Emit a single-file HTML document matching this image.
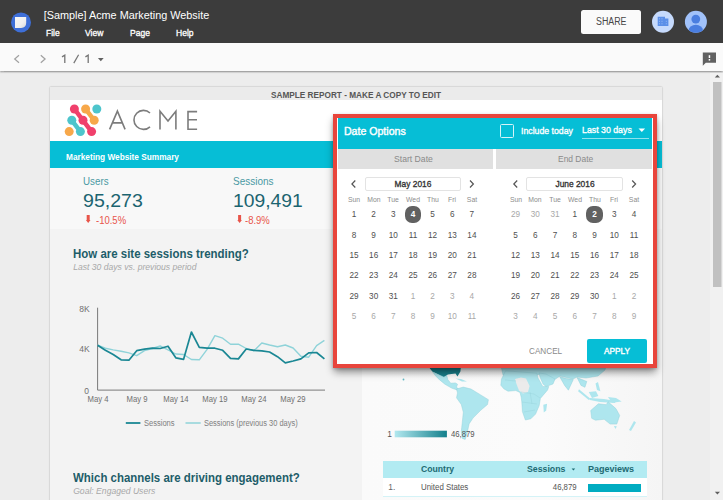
<!DOCTYPE html>
<html><head><meta charset="utf-8"><style>
*{margin:0;padding:0;box-sizing:border-box}
html,body{width:723px;height:500px;overflow:hidden;background:#ededed;font-family:"Liberation Sans",sans-serif}
.t{position:absolute;white-space:nowrap;line-height:1}
.b{position:absolute}
svg{position:absolute;overflow:visible}
</style></head><body>
<div class="b" style="left:0;top:0;width:723px;height:43px;background:#3c3c3c"></div>
<svg style="left:0;top:0" width="60" height="43">
  <circle cx="21" cy="22.4" r="10" fill="#3e6fd8"/>
  <defs><linearGradient id="dg" x1="0" y1="0" x2="1" y2="1"><stop offset="0" stop-color="#f7f7f7"/><stop offset="0.6" stop-color="#f0f0f0"/><stop offset="1" stop-color="#d8d8d8"/></linearGradient></defs>
  <path d="M15 17H26.2V22.8Q26.2 27.9 21.2 27.9H15Z" fill="url(#dg)"/>
</svg>
<div class="t" style="left:43.70px;top:10.00px;font-size:10.85px;color:#ffffff;font-weight:normal;font-style:normal;">[Sample] Acme Marketing Website</div>
<div class="t" style="left:45.50px;top:28.00px;font-size:9.8px;color:#ffffff;font-weight:normal;font-style:normal;transform:scaleX(0.87);transform-origin:0 0;-webkit-text-stroke:0.35px #ffffff;">File</div>
<div class="t" style="left:85.30px;top:28.00px;font-size:9.8px;color:#ffffff;font-weight:normal;font-style:normal;transform:scaleX(0.87);transform-origin:0 0;-webkit-text-stroke:0.35px #ffffff;">View</div>
<div class="t" style="left:130.40px;top:28.00px;font-size:9.8px;color:#ffffff;font-weight:normal;font-style:normal;transform:scaleX(0.87);transform-origin:0 0;-webkit-text-stroke:0.35px #ffffff;">Page</div>
<div class="t" style="left:176.40px;top:28.00px;font-size:9.8px;color:#ffffff;font-weight:normal;font-style:normal;transform:scaleX(0.87);transform-origin:0 0;-webkit-text-stroke:0.35px #ffffff;">Help</div>
<div class="b" style="left:581.4px;top:9.5px;width:60px;height:24.3px;background:#fafafa;border-radius:2.5px"></div>
<div class="t" style="left:596.00px;top:17.00px;font-size:10px;color:#474747;font-weight:normal;font-style:normal;transform:scaleX(0.885);transform-origin:0 0;">SHARE</div>
<svg style="left:640px;top:0" width="83" height="43">
  <circle cx="23" cy="21.8" r="11" fill="#c6dafc"/>
  <path d="M17.7 16.8h7.3v1.8h3.4v7.5h-10.7z" fill="#5b8fe8"/>
  <g fill="#c6dafc" opacity=".55"><rect x="19" y="18.3" width="1" height="1"/><rect x="21.5" y="18.3" width="1" height="1"/><rect x="19" y="20.8" width="1" height="1"/><rect x="21.5" y="20.8" width="1" height="1"/><rect x="19" y="23.3" width="1" height="1"/><rect x="21.5" y="23.3" width="1" height="1"/><rect x="25.8" y="20.8" width="1" height="1"/><rect x="25.8" y="23.3" width="1" height="1"/></g>
  <clipPath id="cc"><circle cx="55.9" cy="21.8" r="11"/></clipPath>
  <circle cx="55.9" cy="21.8" r="11" fill="#a1c2fa"/>
  <g clip-path="url(#cc)" fill="#4a7ee0"><circle cx="55.8" cy="19.1" r="4.4"/><ellipse cx="55.8" cy="30.5" rx="7.2" ry="5.8"/></g>
</svg>
<div class="b" style="left:0;top:43px;width:723px;height:28px;background:#fafafa;box-shadow:0 1.5px 1.5px rgba(0,0,0,.3)"></div>
<svg style="left:0;top:43px" width="723" height="28">
  <path d="M19 12.3l-4.3 3.7 4.3 3.7" stroke="#a0a0a0" stroke-width="1.2" fill="none"/>
  <path d="M40.8 12.3l4.3 3.7-4.3 3.7" stroke="#a0a0a0" stroke-width="1.2" fill="none"/>
  <path d="M97.9 15h5.8l-2.9 3.2z" fill="#616161"/>
  <path d="M702.8 9.5h13.2v10.3h-10.2l-3 3z" fill="#616161"/>
  <rect x="708.7" y="12.2" width="1.5" height="2.8" fill="#fff"/>
  <rect x="708.7" y="16" width="1.5" height="1.6" fill="#fff"/>
</svg>
<svg style="left:0;top:0" width="1" height="1"><path d="M62 56.9l2.8-1.7V63" stroke="#757575" stroke-width="1.3" fill="none"/><path d="M85.4 56.9l2.8-1.7V63" stroke="#757575" stroke-width="1.3" fill="none"/><path d="M73.8 63.1L78.6 54.7" stroke="#757575" stroke-width="1.2" fill="none"/></svg>
<div class="b" style="left:710px;top:73px;width:13px;height:427px;background:#f1f1f1"></div>
<svg style="left:705px;top:72px" width="18" height="428">
  <path d="M12.4 2.8l2.6 2.8h-5.2z" fill="#606060"/>
  <rect x="8" y="10" width="8.5" height="205" fill="#c1c1c1"/>
  <path d="M12.4 422.6l2.6-2.8h-5.2z" fill="#606060"/>
</svg>
<div class="b" style="left:50px;top:87px;width:612px;height:420px;background:#f3f3f3;box-shadow:0 0 1.5px rgba(0,0,0,.32)"></div>
<div class="b" style="left:50px;top:87px;width:612px;height:13px;background:#ebebeb"></div>
<div class="t" style="left:270.50px;top:91.00px;font-size:8.5px;color:#565656;font-weight:bold;font-style:normal;transform:scaleX(0.968);transform-origin:0 0;">SAMPLE REPORT - MAKE A COPY TO EDIT</div>
<div class="b" style="left:50px;top:100px;width:612px;height:41px;background:#ffffff"></div>
<div class="b" style="left:50px;top:141px;width:612px;height:27px;background:#06bed6"></div>
<div class="t" style="left:66.40px;top:153.00px;font-size:9.3px;color:#ffffff;font-weight:bold;font-style:normal;transform:scaleX(0.89);transform-origin:0 0;">Marketing Website Summary</div>
<div class="b" style="left:50px;top:168px;width:612px;height:61px;background:#f8f8f8"></div>
<div class="b" style="left:362px;top:229px;width:300px;height:280px;background:linear-gradient(90deg,#fafafa,#fbfbfb 60%,#f5f5f5)"></div>
<svg style="left:0;top:0" width="723" height="500"><line x1="74.4" y1="109.0" x2="83.0" y2="120.3" stroke="#f0406c" stroke-width="4.5" stroke-linecap="round"/><line x1="83.0" y1="120.3" x2="91.6" y2="131.6" stroke="#f0406c" stroke-width="4.5" stroke-linecap="round"/><line x1="85.6" y1="109.0" x2="94.2" y2="120.3" stroke="#f7a84a" stroke-width="4.5" stroke-linecap="round"/><line x1="71.8" y1="120.3" x2="80.4" y2="131.6" stroke="#4dc5cc" stroke-width="4.5" stroke-linecap="round"/><circle cx="74.4" cy="109.0" r="4.5" fill="#f0406c"/><circle cx="85.6" cy="109.0" r="4.5" fill="#f7a84a"/><circle cx="96.8" cy="109.0" r="4.5" fill="#4dc5cc"/><circle cx="71.8" cy="120.3" r="4.5" fill="#4dc5cc"/><circle cx="83.0" cy="120.3" r="4.5" fill="#f0406c"/><circle cx="94.2" cy="120.3" r="4.5" fill="#f7a84a"/><circle cx="69.2" cy="131.6" r="4.5" fill="#f7a84a"/><circle cx="80.4" cy="131.6" r="4.5" fill="#4dc5cc"/><circle cx="91.6" cy="131.6" r="4.5" fill="#f0406c"/><path d="M109.6 129.4L117.4 111.1L125.1 129.4M112.4 122.9H122.3" stroke="#7c7c7c" stroke-width="1.6" fill="none"/><path d="M150.0 113.0A9.5 9.5 0 1 0 150.0 126.8" stroke="#7c7c7c" stroke-width="1.6" fill="none"/><path d="M160 129.6V111.2L168 121L175.9 111.2V129.6" stroke="#7c7c7c" stroke-width="1.6" fill="none" stroke-linejoin="miter"/><path d="M197.1 111.6H188V129.2H197.1M188 119.7H197" stroke="#7c7c7c" stroke-width="1.6" fill="none"/></svg>
<div class="t" style="left:83.40px;top:177.00px;font-size:10.2px;color:#4a99a3;font-weight:normal;font-style:normal;transform:scaleX(0.96);transform-origin:0 0;">Users</div>
<div class="t" style="left:83.00px;top:191.00px;font-size:19px;color:#1b6470;font-weight:normal;font-style:normal;transform:scaleX(1.03);transform-origin:0 0;">95,273</div>
<div class="t" style="left:233.00px;top:177.00px;font-size:10.2px;color:#4a99a3;font-weight:normal;font-style:normal;transform:scaleX(0.98);transform-origin:0 0;">Sessions</div>
<div class="t" style="left:233.40px;top:191.00px;font-size:19px;color:#1b6470;font-weight:normal;font-style:normal;transform:scaleX(1.015);transform-origin:0 0;">109,491</div>
<div class="t" style="left:96.20px;top:216.00px;font-size:10px;color:#e8554a;font-weight:normal;font-style:normal;transform:scaleX(0.95);transform-origin:0 0;">-10.5%</div>
<div class="t" style="left:245.40px;top:216.00px;font-size:10px;color:#e8554a;font-weight:normal;font-style:normal;transform:scaleX(0.95);transform-origin:0 0;">-8.9%</div>
<svg style="left:0;top:0" width="1" height="1"><path d="M86.7 215h3v5h0.8l-2.3 3.1-2.3-3.1h0.8z" fill="#e8554a"/></svg>
<svg style="left:0;top:0" width="1" height="1"><path d="M238.1 215h3v5h0.8l-2.3 3.1-2.3-3.1h0.8z" fill="#e8554a"/></svg>
<div class="t" style="left:72.80px;top:248.00px;font-size:12.4px;color:#1d5d69;font-weight:bold;font-style:normal;transform:scaleX(0.925);transform-origin:0 0;">How are site sessions trending?</div>
<div class="t" style="left:73.20px;top:263.00px;font-size:8.6px;color:#a8a8a8;font-weight:normal;font-style:italic;">Last 30 days vs. previous period</div>
<svg style="left:0;top:0" width="723" height="500"><path d="M97.6 307.7V390.1H325" stroke="#7a7a7a" stroke-width="1" fill="none"/><polyline points="97.6,345.2 105.4,348.2 113.2,349.9 121.1,351.2 128.9,352.9 136.7,355.7 144.5,350.7 152.3,348.5 160.2,346.0 168.0,349.9 175.8,354.0 183.6,354.5 191.4,359.5 199.3,359.8 207.1,349.4 214.9,335.6 222.7,338.2 230.5,344.2 238.4,344.2 246.2,348.5 254.0,350.8 261.8,343.0 269.6,345.0 277.5,346.8 285.3,345.0 293.1,348.0 300.9,356.3 308.7,357.2 316.6,345.6 324.4,340.4" stroke="#8fd3d9" stroke-width="1.4" fill="none" stroke-linejoin="round"/><polyline points="97.6,345.2 105.4,350.2 113.2,354.5 121.1,359.8 128.9,360.2 136.7,350.7 144.5,349.2 152.3,348.2 160.2,348.5 168.0,346.2 175.8,357.8 183.6,359.3 191.4,332.0 199.3,347.4 207.1,348.2 214.9,348.2 222.7,350.3 230.5,358.4 238.4,358.9 246.2,349.0 254.0,350.3 261.8,350.8 269.6,352.0 277.5,356.7 285.3,362.9 293.1,361.0 300.9,358.9 308.7,352.8 316.6,352.5 324.4,358.9" stroke="#1a8794" stroke-width="1.7" fill="none" stroke-linejoin="round"/><line x1="125.8" y1="423" x2="140.4" y2="423" stroke="#1a8794" stroke-width="1.8"/><line x1="185.5" y1="423" x2="200.7" y2="423" stroke="#8fd3d9" stroke-width="1.5"/></svg>
<div class="t" style="right:633.40px;top:305.00px;font-size:8.5px;color:#707070;font-weight:normal;font-style:normal;">8K</div>
<div class="t" style="right:633.40px;top:345.00px;font-size:8.5px;color:#707070;font-weight:normal;font-style:normal;">4K</div>
<div class="t" style="right:634.10px;top:387.00px;font-size:8.5px;color:#707070;font-weight:normal;font-style:normal;">0</div>
<div class="t" style="left:97.60px;top:395.00px;font-size:8.4px;color:#707070;font-weight:normal;font-style:normal;transform:translateX(-50%) scaleX(0.92);transform-origin:50% 0;">May 4</div>
<div class="t" style="left:136.70px;top:395.00px;font-size:8.4px;color:#707070;font-weight:normal;font-style:normal;transform:translateX(-50%) scaleX(0.92);transform-origin:50% 0;">May 9</div>
<div class="t" style="left:175.80px;top:395.00px;font-size:8.4px;color:#707070;font-weight:normal;font-style:normal;transform:translateX(-50%) scaleX(0.92);transform-origin:50% 0;">May 14</div>
<div class="t" style="left:214.90px;top:395.00px;font-size:8.4px;color:#707070;font-weight:normal;font-style:normal;transform:translateX(-50%) scaleX(0.92);transform-origin:50% 0;">May 19</div>
<div class="t" style="left:254.00px;top:395.00px;font-size:8.4px;color:#707070;font-weight:normal;font-style:normal;transform:translateX(-50%) scaleX(0.92);transform-origin:50% 0;">May 24</div>
<div class="t" style="left:293.10px;top:395.00px;font-size:8.4px;color:#707070;font-weight:normal;font-style:normal;transform:translateX(-50%) scaleX(0.92);transform-origin:50% 0;">May 29</div>
<div class="t" style="left:143.70px;top:419.00px;font-size:8.4px;color:#808080;font-weight:normal;font-style:normal;transform:scaleX(0.9);transform-origin:0 0;">Sessions</div>
<div class="t" style="left:203.50px;top:419.00px;font-size:8.4px;color:#808080;font-weight:normal;font-style:normal;transform:scaleX(0.89);transform-origin:0 0;">Sessions (previous 30 days)</div>
<div class="t" style="left:72.80px;top:472.00px;font-size:12.4px;color:#1d5d69;font-weight:bold;font-style:normal;transform:scaleX(0.925);transform-origin:0 0;">Which channels are driving engagement?</div>
<div class="t" style="left:73.20px;top:487.00px;font-size:8.6px;color:#a8a8a8;font-weight:normal;font-style:italic;">Goal: Engaged Users</div>
<svg style="left:0;top:0" width="723" height="500"><defs><linearGradient id="lg" x1="0" x2="1"><stop offset="0" stop-color="#b2e8ef"/><stop offset="1" stop-color="#13808c"/></linearGradient></defs><rect x="394.7" y="430.7" width="52.2" height="6.6" fill="url(#lg)"/><path d="M428.0 366.0L461.0 366.0L460.4 371.6L457.5 376.5L455.5 373.6L447.8 374.5L443.9 377.4L438.1 374.5L432.3 371.6Z" fill="#17808c"/><path d="M432.7 372.0L443.9 377.0L446.8 375.5L447.8 379.4L450.7 383.2L455.5 382.9L457.5 384.2L456.5 387.1L458.4 389.0L457.1 390.0L451.6 388.1L444.9 384.2L439.1 379.4L435.2 375.5Z" fill="#aee6ee" stroke="#90d0da" stroke-width=".45" stroke-linejoin="round"/><path d="M455.5 378.6L461.0 379.0L467.0 381.5L462.0 381.5Z" fill="#aee6ee"/><path d="M456.5 389.0L463.3 387.1L471.0 389.0L480.7 394.9L488.4 399.7L487.5 404.5L480.7 410.3L473.0 418.1L469.1 423.9L467.1 433.6L465.2 439.4L462.3 438.4L461.3 431.6L462.3 422.0L463.3 412.3L461.3 404.5L456.5 397.8L457.5 392.9Z" fill="#aee6ee" stroke="#90d0da" stroke-width=".45" stroke-linejoin="round"/><circle cx="403.5" cy="379.5" r=".9" fill="#5fb9c4"/><path d="M501.0 366.0L606.0 366.0L605.0 370.0L598.0 376.0L586.0 378.0L577.0 377.0L573.0 379.0L560.0 376.0L554.0 380.0L548.0 379.0L540.0 374.0L528.0 378.0L515.0 379.0L503.0 375.0Z" fill="#aee6ee" stroke="#90d0da" stroke-width=".45" stroke-linejoin="round"/><path d="M505.6 370.8L501.4 379.2L500.8 385.2L503.8 388.8L508.0 391.2L515.8 390.6L520.0 392.4L521.2 397.2L521.8 402.0L522.4 411.6L525.4 420.0L530.8 418.8L535.6 414.0L539.2 405.6L540.4 398.4L547.6 390.0L548.8 386.4L542.8 386.4L538.0 378.0L536.8 373.2Z" fill="#aee6ee" stroke="#90d0da" stroke-width=".45" stroke-linejoin="round"/><path d="M515.0 379.0L521.0 377.5L526.0 378.5L529.6 386.0L528.0 392.0L523.0 393.5L519.0 390.6L516.5 384.0Z" fill="#ebebeb"/><path d="M539.0 373.0L546.0 374.0L555.0 379.0L553.0 384.0L546.0 386.5L543.0 384.0L540.0 377.0Z" fill="#aee6ee" stroke="#90d0da" stroke-width=".45" stroke-linejoin="round"/><path d="M543.3 404.7L547.1 403.8L546.2 410.5L543.8 412.5Z" fill="#aee6ee"/><path d="M505 380L516 381M521 392L534 394L540 398M522 402L537 404M524 412L535 410M530 392L532 404" stroke="#96d2da" stroke-width=".4" fill="none"/><path d="M559.7 376.7L566.5 378.6L573.3 379.6L568.4 390.2L564.6 385.4Z" fill="#aee6ee" stroke="#90d0da" stroke-width=".45" stroke-linejoin="round"/><path d="M577.1 377.6L586.8 381.5L584.9 387.3L581.0 385.4Z" fill="#aee6ee" stroke="#90d0da" stroke-width=".45" stroke-linejoin="round"/><path d="M579.0 389.2L590.7 398.9L588.8 399.9L578.1 391.2Z" fill="#aee6ee"/><path d="M590.0 398.0L604.0 399.0L616.0 401.0L615.0 403.0L600.0 402.0L590.0 400.0Z" fill="#aee6ee"/><path d="M588.8 392.0L596.0 391.2L598.4 396.0L592.0 398.0Z" fill="#aee6ee"/><path d="M595.5 383.4L598.0 382.0L600.4 391.2L597.0 390.0Z" fill="#aee6ee"/><path d="M608.0 397.0L616.0 398.0L621.7 401.5L612.0 402.8Z" fill="#aee6ee"/><path d="M590.7 410.5L598.4 403.8L606.2 404.7L608.1 401.8L615.9 408.6L619.7 415.4L616.8 424.1L610.1 424.1L604.2 419.3L595.5 420.2L591.7 418.3Z" fill="#aee6ee" stroke="#90d0da" stroke-width=".45" stroke-linejoin="round"/><path d="M613.9 426.0L616.8 426.3L615.5 428.9Z" fill="#aee6ee"/><path d="M634.0 421.0L636.0 422.5L631.0 431.0L629.0 430.0Z" fill="#aee6ee"/></svg>
<div class="t" style="left:387.20px;top:430.00px;font-size:8.4px;color:#555555;font-weight:normal;font-style:normal;">1</div>
<div class="t" style="left:450.90px;top:430.00px;font-size:8.4px;color:#555555;font-weight:normal;font-style:normal;transform:scaleX(0.92);transform-origin:0 0;">46,879</div>
<div class="b" style="left:382.8px;top:460.8px;width:264.2px;height:17px;background:#b2ebf2"></div>
<div class="b" style="left:382.8px;top:477.8px;width:264.2px;height:19.5px;background:#ffffff;border-bottom:1px solid #d4f3f7"></div>
<div class="t" style="left:421.30px;top:465.00px;font-size:9.3px;color:#1d6a72;font-weight:bold;font-style:normal;transform:scaleX(0.93);transform-origin:0 0;">Country</div>
<div class="t" style="left:527.00px;top:465.00px;font-size:9.3px;color:#1d6a72;font-weight:bold;font-style:normal;transform:scaleX(0.94);transform-origin:0 0;">Sessions</div>
<svg style="left:0;top:0" width="1" height="1"><path d="M571.6 468.6h3.6l-1.8 2z" fill="#1d6a72"/></svg>
<div class="t" style="left:588.40px;top:465.00px;font-size:9.3px;color:#1d6a72;font-weight:bold;font-style:normal;transform:scaleX(0.97);transform-origin:0 0;">Pageviews</div>
<div class="t" style="left:388.30px;top:483.00px;font-size:8.4px;color:#666666;font-weight:normal;font-style:normal;">1.</div>
<div class="t" style="left:421.30px;top:483.00px;font-size:8.4px;color:#555555;font-weight:normal;font-style:normal;transform:scaleX(0.94);transform-origin:0 0;">United States</div>
<div class="t" style="right:146.00px;top:483.00px;font-size:8.4px;color:#555555;font-weight:normal;font-style:normal;transform:scaleX(0.93);transform-origin:100% 0;">46,879</div>
<div class="b" style="left:588.2px;top:484px;width:52.4px;height:7.9px;background:#00acc1"></div>
<div class="b" style="left:333.2px;top:113.5px;width:323.59999999999997px;height:254.5px;background:#fff;border:4.4px solid #e8453c;box-shadow:0 1px 3px rgba(0,0,0,.18),0 5px 8px -1px rgba(0,0,0,.45)"></div>
<div class="b" style="left:337.59999999999997px;top:117.9px;width:314.8px;height:30.900000000000006px;background:#06bed6"></div>
<div class="t" style="left:343.90px;top:126.00px;font-size:10.6px;color:#ffffff;font-weight:normal;font-style:normal;-webkit-text-stroke:0.4px #ffffff;">Date Options</div>
<div class="b" style="left:500.3px;top:124.4px;width:13.5px;height:13.2px;border:1.4px solid #d6f4f8;border-radius:1.5px"></div>
<div class="t" style="left:521.00px;top:126.00px;font-size:9.6px;color:#ffffff;font-weight:normal;font-style:normal;transform:scaleX(0.91);transform-origin:0 0;-webkit-text-stroke:0.35px #ffffff;">Include today</div>
<div class="t" style="left:581.70px;top:125.00px;font-size:9.6px;color:#ffffff;font-weight:normal;font-style:normal;transform:scaleX(0.915);transform-origin:0 0;-webkit-text-stroke:0.35px #ffffff;">Last 30 days</div>
<div class="b" style="left:581.7px;top:138.2px;width:67.7px;height:1px;background:rgba(255,255,255,.55)"></div>
<svg style="left:0;top:0" width="1" height="1"><path d="M638.5 128.4h6.6l-3.3 3.6z" fill="#ffffff"/></svg>
<div class="b" style="left:337.59999999999997px;top:148.8px;width:155.90000000000003px;height:20.7px;background:#e0e0e0"></div>
<div class="b" style="left:495.5px;top:148.8px;width:156.89999999999998px;height:20.7px;background:#e0e0e0"></div>
<div class="t" style="left:393.50px;top:154.00px;font-size:9.4px;color:#8a8a8a;font-weight:normal;font-style:normal;transform:scaleX(0.92);transform-origin:0 0;">Start Date</div>
<div class="t" style="left:557.60px;top:154.00px;font-size:9.4px;color:#8a8a8a;font-weight:normal;font-style:normal;transform:scaleX(0.9);transform-origin:0 0;">End Date</div>
<div class="b" style="left:364.6px;top:177px;width:96.59999999999997px;height:14.2px;border:1px solid #e3e3e3;border-radius:2px;background:#fff"></div>
<div class="t" style="left:412.90px;top:180.00px;font-size:9.3px;color:#333333;font-weight:normal;font-style:normal;transform:translateX(-50%) scaleX(0.9);transform-origin:50% 0;-webkit-text-stroke:0.35px #333333;">May 2016</div>
<svg style="left:0;top:0" width="1" height="1"><path d="M355.3 180.5l-3.4 3.5 3.4 3.5" stroke="#555" stroke-width="1.2" fill="none"/><path d="M470.0 180.5l3.4 3.5-3.4 3.5" stroke="#555" stroke-width="1.2" fill="none"/></svg>
<div class="t" style="left:354.00px;top:196.00px;font-size:7.2px;color:#8c8c8c;font-weight:normal;font-style:normal;transform:translateX(-50%) scaleX(0.95);transform-origin:50% 0;">Sun</div>
<div class="t" style="left:373.65px;top:196.00px;font-size:7.2px;color:#8c8c8c;font-weight:normal;font-style:normal;transform:translateX(-50%) scaleX(0.95);transform-origin:50% 0;">Mon</div>
<div class="t" style="left:393.30px;top:196.00px;font-size:7.2px;color:#8c8c8c;font-weight:normal;font-style:normal;transform:translateX(-50%) scaleX(0.95);transform-origin:50% 0;">Tue</div>
<div class="t" style="left:412.95px;top:196.00px;font-size:7.2px;color:#8c8c8c;font-weight:normal;font-style:normal;transform:translateX(-50%) scaleX(0.95);transform-origin:50% 0;">Wed</div>
<div class="t" style="left:432.60px;top:196.00px;font-size:7.2px;color:#8c8c8c;font-weight:normal;font-style:normal;transform:translateX(-50%) scaleX(0.95);transform-origin:50% 0;">Thu</div>
<div class="t" style="left:452.25px;top:196.00px;font-size:7.2px;color:#8c8c8c;font-weight:normal;font-style:normal;transform:translateX(-50%) scaleX(0.95);transform-origin:50% 0;">Fri</div>
<div class="t" style="left:471.90px;top:196.00px;font-size:7.2px;color:#8c8c8c;font-weight:normal;font-style:normal;transform:translateX(-50%) scaleX(0.95);transform-origin:50% 0;">Sat</div>
<div class="t" style="left:354.00px;top:211.00px;font-size:8.2px;color:#4f4f4f;font-weight:normal;font-style:normal;transform:translateX(-50%) scaleX(1.0);transform-origin:50% 0;">1</div>
<div class="t" style="left:373.65px;top:211.00px;font-size:8.2px;color:#4f4f4f;font-weight:normal;font-style:normal;transform:translateX(-50%) scaleX(1.0);transform-origin:50% 0;">2</div>
<div class="t" style="left:393.30px;top:211.00px;font-size:8.2px;color:#4f4f4f;font-weight:normal;font-style:normal;transform:translateX(-50%) scaleX(1.0);transform-origin:50% 0;">3</div>
<div class="b" style="left:404.65px;top:206.10px;width:16.6px;height:16.6px;border-radius:7px;background:#616161"></div>
<div class="t" style="left:412.95px;top:211.00px;font-size:8.2px;color:#ffffff;font-weight:bold;font-style:normal;transform:translateX(-50%) scaleX(1.0);transform-origin:50% 0;">4</div>
<div class="t" style="left:432.60px;top:211.00px;font-size:8.2px;color:#4f4f4f;font-weight:normal;font-style:normal;transform:translateX(-50%) scaleX(1.0);transform-origin:50% 0;">5</div>
<div class="t" style="left:452.25px;top:211.00px;font-size:8.2px;color:#4f4f4f;font-weight:normal;font-style:normal;transform:translateX(-50%) scaleX(1.0);transform-origin:50% 0;">6</div>
<div class="t" style="left:471.90px;top:211.00px;font-size:8.2px;color:#4f4f4f;font-weight:normal;font-style:normal;transform:translateX(-50%) scaleX(1.0);transform-origin:50% 0;">7</div>
<div class="t" style="left:354.00px;top:232.00px;font-size:8.2px;color:#4f4f4f;font-weight:normal;font-style:normal;transform:translateX(-50%) scaleX(1.0);transform-origin:50% 0;">8</div>
<div class="t" style="left:373.65px;top:232.00px;font-size:8.2px;color:#4f4f4f;font-weight:normal;font-style:normal;transform:translateX(-50%) scaleX(1.0);transform-origin:50% 0;">9</div>
<div class="t" style="left:393.30px;top:232.00px;font-size:8.2px;color:#4f4f4f;font-weight:normal;font-style:normal;transform:translateX(-50%) scaleX(1.0);transform-origin:50% 0;">10</div>
<div class="t" style="left:412.95px;top:232.00px;font-size:8.2px;color:#4f4f4f;font-weight:normal;font-style:normal;transform:translateX(-50%) scaleX(1.0);transform-origin:50% 0;">11</div>
<div class="t" style="left:432.60px;top:232.00px;font-size:8.2px;color:#4f4f4f;font-weight:normal;font-style:normal;transform:translateX(-50%) scaleX(1.0);transform-origin:50% 0;">12</div>
<div class="t" style="left:452.25px;top:232.00px;font-size:8.2px;color:#4f4f4f;font-weight:normal;font-style:normal;transform:translateX(-50%) scaleX(1.0);transform-origin:50% 0;">13</div>
<div class="t" style="left:471.90px;top:232.00px;font-size:8.2px;color:#4f4f4f;font-weight:normal;font-style:normal;transform:translateX(-50%) scaleX(1.0);transform-origin:50% 0;">14</div>
<div class="t" style="left:354.00px;top:252.00px;font-size:8.2px;color:#4f4f4f;font-weight:normal;font-style:normal;transform:translateX(-50%) scaleX(1.0);transform-origin:50% 0;">15</div>
<div class="t" style="left:373.65px;top:252.00px;font-size:8.2px;color:#4f4f4f;font-weight:normal;font-style:normal;transform:translateX(-50%) scaleX(1.0);transform-origin:50% 0;">16</div>
<div class="t" style="left:393.30px;top:252.00px;font-size:8.2px;color:#4f4f4f;font-weight:normal;font-style:normal;transform:translateX(-50%) scaleX(1.0);transform-origin:50% 0;">17</div>
<div class="t" style="left:412.95px;top:252.00px;font-size:8.2px;color:#4f4f4f;font-weight:normal;font-style:normal;transform:translateX(-50%) scaleX(1.0);transform-origin:50% 0;">18</div>
<div class="t" style="left:432.60px;top:252.00px;font-size:8.2px;color:#4f4f4f;font-weight:normal;font-style:normal;transform:translateX(-50%) scaleX(1.0);transform-origin:50% 0;">19</div>
<div class="t" style="left:452.25px;top:252.00px;font-size:8.2px;color:#4f4f4f;font-weight:normal;font-style:normal;transform:translateX(-50%) scaleX(1.0);transform-origin:50% 0;">20</div>
<div class="t" style="left:471.90px;top:252.00px;font-size:8.2px;color:#4f4f4f;font-weight:normal;font-style:normal;transform:translateX(-50%) scaleX(1.0);transform-origin:50% 0;">21</div>
<div class="t" style="left:354.00px;top:272.00px;font-size:8.2px;color:#4f4f4f;font-weight:normal;font-style:normal;transform:translateX(-50%) scaleX(1.0);transform-origin:50% 0;">22</div>
<div class="t" style="left:373.65px;top:272.00px;font-size:8.2px;color:#4f4f4f;font-weight:normal;font-style:normal;transform:translateX(-50%) scaleX(1.0);transform-origin:50% 0;">23</div>
<div class="t" style="left:393.30px;top:272.00px;font-size:8.2px;color:#4f4f4f;font-weight:normal;font-style:normal;transform:translateX(-50%) scaleX(1.0);transform-origin:50% 0;">24</div>
<div class="t" style="left:412.95px;top:272.00px;font-size:8.2px;color:#4f4f4f;font-weight:normal;font-style:normal;transform:translateX(-50%) scaleX(1.0);transform-origin:50% 0;">25</div>
<div class="t" style="left:432.60px;top:272.00px;font-size:8.2px;color:#4f4f4f;font-weight:normal;font-style:normal;transform:translateX(-50%) scaleX(1.0);transform-origin:50% 0;">26</div>
<div class="t" style="left:452.25px;top:272.00px;font-size:8.2px;color:#4f4f4f;font-weight:normal;font-style:normal;transform:translateX(-50%) scaleX(1.0);transform-origin:50% 0;">27</div>
<div class="t" style="left:471.90px;top:272.00px;font-size:8.2px;color:#4f4f4f;font-weight:normal;font-style:normal;transform:translateX(-50%) scaleX(1.0);transform-origin:50% 0;">28</div>
<div class="t" style="left:354.00px;top:293.00px;font-size:8.2px;color:#4f4f4f;font-weight:normal;font-style:normal;transform:translateX(-50%) scaleX(1.0);transform-origin:50% 0;">29</div>
<div class="t" style="left:373.65px;top:293.00px;font-size:8.2px;color:#4f4f4f;font-weight:normal;font-style:normal;transform:translateX(-50%) scaleX(1.0);transform-origin:50% 0;">30</div>
<div class="t" style="left:393.30px;top:293.00px;font-size:8.2px;color:#4f4f4f;font-weight:normal;font-style:normal;transform:translateX(-50%) scaleX(1.0);transform-origin:50% 0;">31</div>
<div class="t" style="left:412.95px;top:293.00px;font-size:8.2px;color:#a8a8a8;font-weight:normal;font-style:normal;transform:translateX(-50%) scaleX(1.0);transform-origin:50% 0;">1</div>
<div class="t" style="left:432.60px;top:293.00px;font-size:8.2px;color:#a8a8a8;font-weight:normal;font-style:normal;transform:translateX(-50%) scaleX(1.0);transform-origin:50% 0;">2</div>
<div class="t" style="left:452.25px;top:293.00px;font-size:8.2px;color:#a8a8a8;font-weight:normal;font-style:normal;transform:translateX(-50%) scaleX(1.0);transform-origin:50% 0;">3</div>
<div class="t" style="left:471.90px;top:293.00px;font-size:8.2px;color:#a8a8a8;font-weight:normal;font-style:normal;transform:translateX(-50%) scaleX(1.0);transform-origin:50% 0;">4</div>
<div class="t" style="left:354.00px;top:313.00px;font-size:8.2px;color:#a8a8a8;font-weight:normal;font-style:normal;transform:translateX(-50%) scaleX(1.0);transform-origin:50% 0;">5</div>
<div class="t" style="left:373.65px;top:313.00px;font-size:8.2px;color:#a8a8a8;font-weight:normal;font-style:normal;transform:translateX(-50%) scaleX(1.0);transform-origin:50% 0;">6</div>
<div class="t" style="left:393.30px;top:313.00px;font-size:8.2px;color:#a8a8a8;font-weight:normal;font-style:normal;transform:translateX(-50%) scaleX(1.0);transform-origin:50% 0;">7</div>
<div class="t" style="left:412.95px;top:313.00px;font-size:8.2px;color:#a8a8a8;font-weight:normal;font-style:normal;transform:translateX(-50%) scaleX(1.0);transform-origin:50% 0;">8</div>
<div class="t" style="left:432.60px;top:313.00px;font-size:8.2px;color:#a8a8a8;font-weight:normal;font-style:normal;transform:translateX(-50%) scaleX(1.0);transform-origin:50% 0;">9</div>
<div class="t" style="left:452.25px;top:313.00px;font-size:8.2px;color:#a8a8a8;font-weight:normal;font-style:normal;transform:translateX(-50%) scaleX(1.0);transform-origin:50% 0;">10</div>
<div class="t" style="left:471.90px;top:313.00px;font-size:8.2px;color:#a8a8a8;font-weight:normal;font-style:normal;transform:translateX(-50%) scaleX(1.0);transform-origin:50% 0;">11</div>
<div class="b" style="left:526.4px;top:177px;width:97.10000000000002px;height:14.2px;border:1px solid #e3e3e3;border-radius:2px;background:#fff"></div>
<div class="t" style="left:574.95px;top:180.00px;font-size:9.3px;color:#333333;font-weight:normal;font-style:normal;transform:translateX(-50%) scaleX(0.9);transform-origin:50% 0;-webkit-text-stroke:0.35px #333333;">June 2016</div>
<svg style="left:0;top:0" width="1" height="1"><path d="M517.1999999999999 180.5l-3.4 3.5 3.4 3.5" stroke="#555" stroke-width="1.2" fill="none"/><path d="M632.2 180.5l3.4 3.5-3.4 3.5" stroke="#555" stroke-width="1.2" fill="none"/></svg>
<div class="t" style="left:515.60px;top:196.00px;font-size:7.2px;color:#8c8c8c;font-weight:normal;font-style:normal;transform:translateX(-50%) scaleX(0.95);transform-origin:50% 0;">Sun</div>
<div class="t" style="left:535.35px;top:196.00px;font-size:7.2px;color:#8c8c8c;font-weight:normal;font-style:normal;transform:translateX(-50%) scaleX(0.95);transform-origin:50% 0;">Mon</div>
<div class="t" style="left:555.10px;top:196.00px;font-size:7.2px;color:#8c8c8c;font-weight:normal;font-style:normal;transform:translateX(-50%) scaleX(0.95);transform-origin:50% 0;">Tue</div>
<div class="t" style="left:574.85px;top:196.00px;font-size:7.2px;color:#8c8c8c;font-weight:normal;font-style:normal;transform:translateX(-50%) scaleX(0.95);transform-origin:50% 0;">Wed</div>
<div class="t" style="left:594.60px;top:196.00px;font-size:7.2px;color:#8c8c8c;font-weight:normal;font-style:normal;transform:translateX(-50%) scaleX(0.95);transform-origin:50% 0;">Thu</div>
<div class="t" style="left:614.35px;top:196.00px;font-size:7.2px;color:#8c8c8c;font-weight:normal;font-style:normal;transform:translateX(-50%) scaleX(0.95);transform-origin:50% 0;">Fri</div>
<div class="t" style="left:634.10px;top:196.00px;font-size:7.2px;color:#8c8c8c;font-weight:normal;font-style:normal;transform:translateX(-50%) scaleX(0.95);transform-origin:50% 0;">Sat</div>
<div class="t" style="left:515.60px;top:211.00px;font-size:8.2px;color:#a8a8a8;font-weight:normal;font-style:normal;transform:translateX(-50%) scaleX(1.0);transform-origin:50% 0;">29</div>
<div class="t" style="left:535.35px;top:211.00px;font-size:8.2px;color:#a8a8a8;font-weight:normal;font-style:normal;transform:translateX(-50%) scaleX(1.0);transform-origin:50% 0;">30</div>
<div class="t" style="left:555.10px;top:211.00px;font-size:8.2px;color:#a8a8a8;font-weight:normal;font-style:normal;transform:translateX(-50%) scaleX(1.0);transform-origin:50% 0;">31</div>
<div class="t" style="left:574.85px;top:211.00px;font-size:8.2px;color:#4f4f4f;font-weight:normal;font-style:normal;transform:translateX(-50%) scaleX(1.0);transform-origin:50% 0;">1</div>
<div class="b" style="left:586.30px;top:206.10px;width:16.6px;height:16.6px;border-radius:7px;background:#616161"></div>
<div class="t" style="left:594.60px;top:211.00px;font-size:8.2px;color:#ffffff;font-weight:bold;font-style:normal;transform:translateX(-50%) scaleX(1.0);transform-origin:50% 0;">2</div>
<div class="t" style="left:614.35px;top:211.00px;font-size:8.2px;color:#4f4f4f;font-weight:normal;font-style:normal;transform:translateX(-50%) scaleX(1.0);transform-origin:50% 0;">3</div>
<div class="t" style="left:634.10px;top:211.00px;font-size:8.2px;color:#4f4f4f;font-weight:normal;font-style:normal;transform:translateX(-50%) scaleX(1.0);transform-origin:50% 0;">4</div>
<div class="t" style="left:515.60px;top:232.00px;font-size:8.2px;color:#4f4f4f;font-weight:normal;font-style:normal;transform:translateX(-50%) scaleX(1.0);transform-origin:50% 0;">5</div>
<div class="t" style="left:535.35px;top:232.00px;font-size:8.2px;color:#4f4f4f;font-weight:normal;font-style:normal;transform:translateX(-50%) scaleX(1.0);transform-origin:50% 0;">6</div>
<div class="t" style="left:555.10px;top:232.00px;font-size:8.2px;color:#4f4f4f;font-weight:normal;font-style:normal;transform:translateX(-50%) scaleX(1.0);transform-origin:50% 0;">7</div>
<div class="t" style="left:574.85px;top:232.00px;font-size:8.2px;color:#4f4f4f;font-weight:normal;font-style:normal;transform:translateX(-50%) scaleX(1.0);transform-origin:50% 0;">8</div>
<div class="t" style="left:594.60px;top:232.00px;font-size:8.2px;color:#4f4f4f;font-weight:normal;font-style:normal;transform:translateX(-50%) scaleX(1.0);transform-origin:50% 0;">9</div>
<div class="t" style="left:614.35px;top:232.00px;font-size:8.2px;color:#4f4f4f;font-weight:normal;font-style:normal;transform:translateX(-50%) scaleX(1.0);transform-origin:50% 0;">10</div>
<div class="t" style="left:634.10px;top:232.00px;font-size:8.2px;color:#4f4f4f;font-weight:normal;font-style:normal;transform:translateX(-50%) scaleX(1.0);transform-origin:50% 0;">11</div>
<div class="t" style="left:515.60px;top:252.00px;font-size:8.2px;color:#4f4f4f;font-weight:normal;font-style:normal;transform:translateX(-50%) scaleX(1.0);transform-origin:50% 0;">12</div>
<div class="t" style="left:535.35px;top:252.00px;font-size:8.2px;color:#4f4f4f;font-weight:normal;font-style:normal;transform:translateX(-50%) scaleX(1.0);transform-origin:50% 0;">13</div>
<div class="t" style="left:555.10px;top:252.00px;font-size:8.2px;color:#4f4f4f;font-weight:normal;font-style:normal;transform:translateX(-50%) scaleX(1.0);transform-origin:50% 0;">14</div>
<div class="t" style="left:574.85px;top:252.00px;font-size:8.2px;color:#4f4f4f;font-weight:normal;font-style:normal;transform:translateX(-50%) scaleX(1.0);transform-origin:50% 0;">15</div>
<div class="t" style="left:594.60px;top:252.00px;font-size:8.2px;color:#4f4f4f;font-weight:normal;font-style:normal;transform:translateX(-50%) scaleX(1.0);transform-origin:50% 0;">16</div>
<div class="t" style="left:614.35px;top:252.00px;font-size:8.2px;color:#4f4f4f;font-weight:normal;font-style:normal;transform:translateX(-50%) scaleX(1.0);transform-origin:50% 0;">17</div>
<div class="t" style="left:634.10px;top:252.00px;font-size:8.2px;color:#4f4f4f;font-weight:normal;font-style:normal;transform:translateX(-50%) scaleX(1.0);transform-origin:50% 0;">18</div>
<div class="t" style="left:515.60px;top:272.00px;font-size:8.2px;color:#4f4f4f;font-weight:normal;font-style:normal;transform:translateX(-50%) scaleX(1.0);transform-origin:50% 0;">19</div>
<div class="t" style="left:535.35px;top:272.00px;font-size:8.2px;color:#4f4f4f;font-weight:normal;font-style:normal;transform:translateX(-50%) scaleX(1.0);transform-origin:50% 0;">20</div>
<div class="t" style="left:555.10px;top:272.00px;font-size:8.2px;color:#4f4f4f;font-weight:normal;font-style:normal;transform:translateX(-50%) scaleX(1.0);transform-origin:50% 0;">21</div>
<div class="t" style="left:574.85px;top:272.00px;font-size:8.2px;color:#4f4f4f;font-weight:normal;font-style:normal;transform:translateX(-50%) scaleX(1.0);transform-origin:50% 0;">22</div>
<div class="t" style="left:594.60px;top:272.00px;font-size:8.2px;color:#4f4f4f;font-weight:normal;font-style:normal;transform:translateX(-50%) scaleX(1.0);transform-origin:50% 0;">23</div>
<div class="t" style="left:614.35px;top:272.00px;font-size:8.2px;color:#4f4f4f;font-weight:normal;font-style:normal;transform:translateX(-50%) scaleX(1.0);transform-origin:50% 0;">24</div>
<div class="t" style="left:634.10px;top:272.00px;font-size:8.2px;color:#4f4f4f;font-weight:normal;font-style:normal;transform:translateX(-50%) scaleX(1.0);transform-origin:50% 0;">25</div>
<div class="t" style="left:515.60px;top:293.00px;font-size:8.2px;color:#4f4f4f;font-weight:normal;font-style:normal;transform:translateX(-50%) scaleX(1.0);transform-origin:50% 0;">26</div>
<div class="t" style="left:535.35px;top:293.00px;font-size:8.2px;color:#4f4f4f;font-weight:normal;font-style:normal;transform:translateX(-50%) scaleX(1.0);transform-origin:50% 0;">27</div>
<div class="t" style="left:555.10px;top:293.00px;font-size:8.2px;color:#4f4f4f;font-weight:normal;font-style:normal;transform:translateX(-50%) scaleX(1.0);transform-origin:50% 0;">28</div>
<div class="t" style="left:574.85px;top:293.00px;font-size:8.2px;color:#4f4f4f;font-weight:normal;font-style:normal;transform:translateX(-50%) scaleX(1.0);transform-origin:50% 0;">29</div>
<div class="t" style="left:594.60px;top:293.00px;font-size:8.2px;color:#4f4f4f;font-weight:normal;font-style:normal;transform:translateX(-50%) scaleX(1.0);transform-origin:50% 0;">30</div>
<div class="t" style="left:614.35px;top:293.00px;font-size:8.2px;color:#a8a8a8;font-weight:normal;font-style:normal;transform:translateX(-50%) scaleX(1.0);transform-origin:50% 0;">1</div>
<div class="t" style="left:634.10px;top:293.00px;font-size:8.2px;color:#a8a8a8;font-weight:normal;font-style:normal;transform:translateX(-50%) scaleX(1.0);transform-origin:50% 0;">2</div>
<div class="t" style="left:515.60px;top:313.00px;font-size:8.2px;color:#a8a8a8;font-weight:normal;font-style:normal;transform:translateX(-50%) scaleX(1.0);transform-origin:50% 0;">3</div>
<div class="t" style="left:535.35px;top:313.00px;font-size:8.2px;color:#a8a8a8;font-weight:normal;font-style:normal;transform:translateX(-50%) scaleX(1.0);transform-origin:50% 0;">4</div>
<div class="t" style="left:555.10px;top:313.00px;font-size:8.2px;color:#a8a8a8;font-weight:normal;font-style:normal;transform:translateX(-50%) scaleX(1.0);transform-origin:50% 0;">5</div>
<div class="t" style="left:574.85px;top:313.00px;font-size:8.2px;color:#a8a8a8;font-weight:normal;font-style:normal;transform:translateX(-50%) scaleX(1.0);transform-origin:50% 0;">6</div>
<div class="t" style="left:594.60px;top:313.00px;font-size:8.2px;color:#a8a8a8;font-weight:normal;font-style:normal;transform:translateX(-50%) scaleX(1.0);transform-origin:50% 0;">7</div>
<div class="t" style="left:614.35px;top:313.00px;font-size:8.2px;color:#a8a8a8;font-weight:normal;font-style:normal;transform:translateX(-50%) scaleX(1.0);transform-origin:50% 0;">8</div>
<div class="t" style="left:634.10px;top:313.00px;font-size:8.2px;color:#a8a8a8;font-weight:normal;font-style:normal;transform:translateX(-50%) scaleX(1.0);transform-origin:50% 0;">9</div>
<div class="b" style="left:587px;top:339.3px;width:59.7px;height:23.9px;background:#06bed6;border-radius:2px"></div>
<div class="t" style="left:529.40px;top:347.00px;font-size:9.2px;color:#8a8a8a;font-weight:normal;font-style:normal;transform:scaleX(0.89);transform-origin:0 0;">CANCEL</div>
<div class="t" style="left:604.00px;top:347.00px;font-size:9.2px;color:#ffffff;font-weight:normal;font-style:normal;transform:scaleX(0.9);transform-origin:0 0;-webkit-text-stroke:0.4px #ffffff;">APPLY</div>
</body></html>
